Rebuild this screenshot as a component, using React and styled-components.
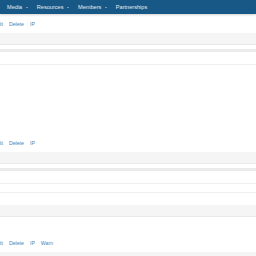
import styled, { createGlobalStyle } from "styled-components"

const GlobalStyle = createGlobalStyle`
html, body {
margin: 0;
padding: 0;
background: #fff;
font-family: "Liberation Sans", Arial, sans-serif;
}
`
const Page = styled.div`
width: 256px;
height: 256px;
overflow: hidden;
background: #fff;
`
const Nav = styled.div`
height: 14px;
background: #185886;
display: flex;
align-items: center;
padding-left: 2.5px;
box-shadow: 0 1px 2px rgba(0, 0, 0, 0.18);
position: relative;
`
const NavItem = styled.div`
display: flex;
align-items: center;
gap: 3.5px;
padding: 0 4.5px;
color: #e4ecf3;
font-size: 5.6px;
white-space: nowrap;
`
const Caret = styled.span`
width: 0;
height: 0;
border-left: 1.5px solid transparent;
border-right: 1.5px solid transparent;
border-top: 1.8px solid #c9d8e6;
`
const Actions = styled.div`
height: 19px;
display: flex;
align-items: center;
gap: 6px;
margin-left: -6px;
font-size: 5.2px;
color: #4386c0;
`
const Band = styled.div`
height: 11px;
background: #f5f5f5;
border-bottom: 1px solid #e9e9e9;
`
const Gap = styled.div`
height: ${p => p.h}px;
`
const Post = styled.div`
border-top: 3px solid #ebebeb;
`
const Row = styled.div`
height: ${p => p.h}px;
border-bottom: 1px solid ${p => (p.line ? "#f0f0f0" : "transparent")};
`
const Body = styled.div`
height: ${p => p.h}px;
`

const links = ["Edit", "Delete", "IP"]

function ActionBar({ items }) {
    return (
        <Actions>
            {items.map(l => <span key={l}>{l}</span>)}
        </Actions>
    )
}

export default function App() {
    return (
        <Page>
            <GlobalStyle />
            <Nav>
                <NavItem>Media<Caret /></NavItem>
                <NavItem>Resources<Caret /></NavItem>
                <NavItem>Members<Caret /></NavItem>
                <NavItem>Partnerships</NavItem>
            </Nav>
            <ActionBar items={links} />
            <Band />
            <Gap h={4} />
            <Post>
                <Row h={12} line />
                <Body h={68} />
                <ActionBar items={links} />
                <Band />
            </Post>
            <Gap h={4} />
            <Post>
                <Row h={12} line />
                <Row h={8} line />
                <Row h={11} />
                <Band />
                <Body h={16} />
                <ActionBar items={[...links, "Warn"]} />
                <Band />
            </Post>
        </Page>
    )
}
